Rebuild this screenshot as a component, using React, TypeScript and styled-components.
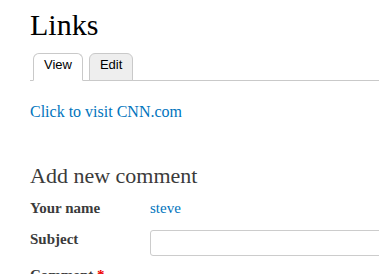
import styled, { createGlobalStyle } from "styled-components";

const GlobalStyle = createGlobalStyle`
  html, body {
    margin: 0;
    padding: 0;
    background: #fff;
  }
  body {
    font-family: "Liberation Serif", "Times New Roman", serif;
    color: #3b3b3b;
  }
`;

const Page = styled.div`
  padding: 7px 0 0 30px;
  width: 349px;
  overflow: hidden;
`;

const Title = styled.h1`
  margin: 0;
  font-size: 30px;
  line-height: 36px;
  font-weight: normal;
  color: #000;
`;

const Tabs = styled.ul`
  display: flex;
  align-items: flex-end;
  gap: 6px;
  margin: 10px 0 0;
  padding: 0 0 0 3px;
  list-style: none;
  border-bottom: 1px solid #c9c9c9;
`;

const Tab = styled.li<{ active?: boolean }>`
  margin-bottom: -1px;
  padding: 3px 10px 7px;
  border: 1px solid #c9c9c9;
  border-bottom-color: ${(p) => (p.active ? "#fff" : "#c9c9c9")};
  border-radius: 6px 6px 0 0;
  background: ${(p) => (p.active ? "#fff" : "#eee")};
  font-family: "Liberation Sans", Arial, sans-serif;
  font-size: 13px;
  line-height: 16px;
  color: #000;
`;

const Link = styled.a`
  color: #0074bd;
  text-decoration: none;
`;

const Content = styled.p`
  margin: 19px 0 0;
  font-size: 16px;
  line-height: 24px;
`;

const Heading = styled.h2`
  margin: 38px 0 0;
  font-size: 22px;
  line-height: 28px;
  font-weight: normal;
  color: #3b3b3b;
`;

const Form = styled.div`
  display: grid;
  grid-template-columns: 120px 1fr;
  margin-top: 8px;
`;

const Label = styled.div<{ top?: number }>`
  margin-top: ${(p) => p.top ?? 0}px;
  font-size: 15px;
  line-height: 20px;
  font-weight: bold;
  color: #3b3b3b;
`;

const Value = styled.div<{ top?: number }>`
  margin-top: ${(p) => p.top ?? 0}px;
  font-size: 15px;
  line-height: 20px;
`;

const Input = styled.input`
  display: block;
  box-sizing: border-box;
  width: 260px;
  height: 26px;
  margin-top: 12px;
  border: 1px solid #ccc;
  border-radius: 3px;
  background: #fff;
`;

const Required = styled.span`
  color: #e00;
`;

export default function App() {
  return (
    <>
      <GlobalStyle />
      <Page>
        <Title>Links</Title>
        <Tabs>
          <Tab active>View</Tab>
          <Tab>Edit</Tab>
        </Tabs>
        <Content>
          <Link href="#">Click to visit CNN.com</Link>
        </Content>
        <Heading>Add new comment</Heading>
        <Form>
          <Label>Your name</Label>
          <Value>
            <Link href="#">steve</Link>
          </Value>
          <Label top={11}>Subject</Label>
          <Input type="text" />
          <Label top={9}>
            Comment <Required>*</Required>
          </Label>
          <Value top={9} />
        </Form>
      </Page>
    </>
  );
}
